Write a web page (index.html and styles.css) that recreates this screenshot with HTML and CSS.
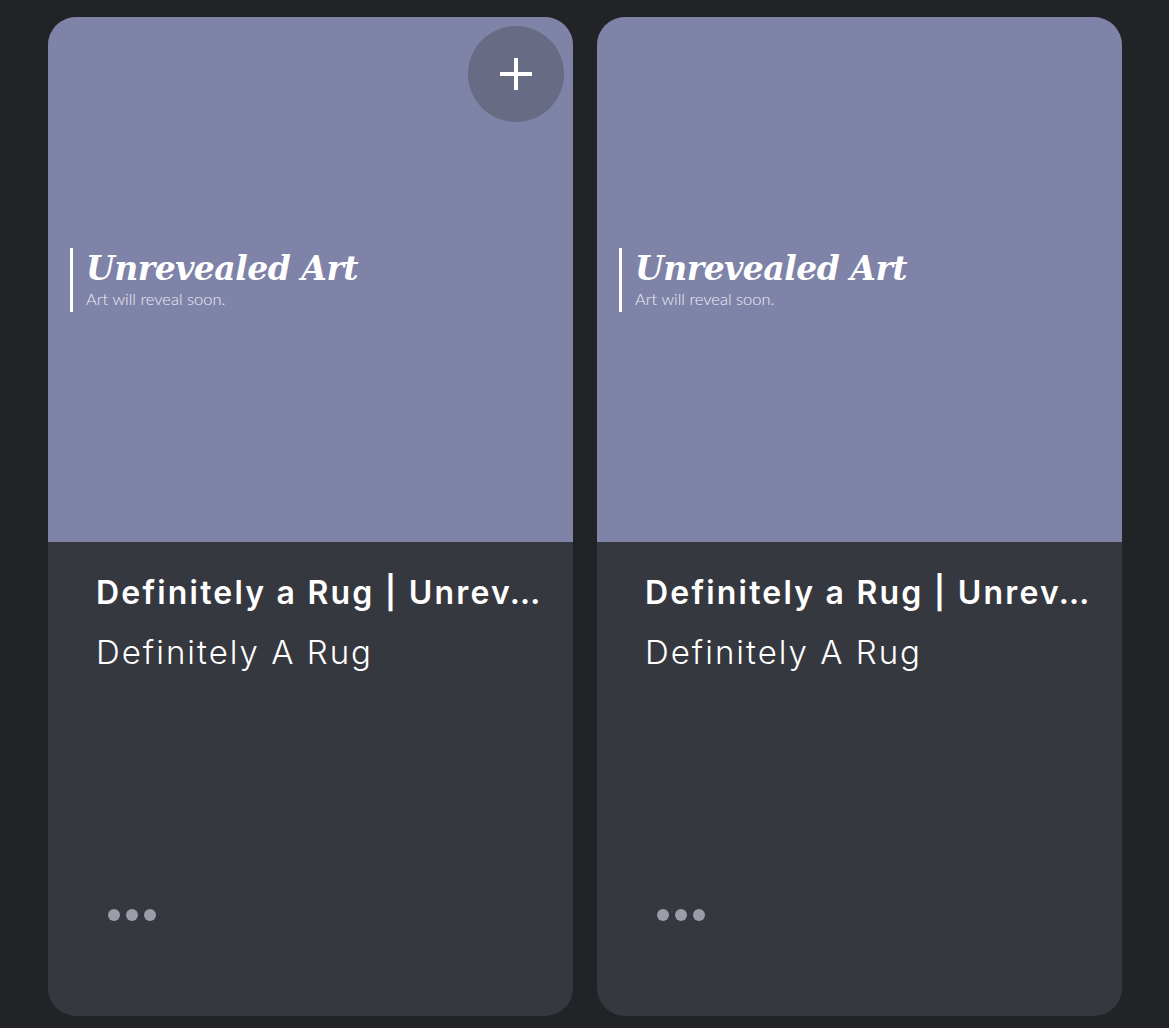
FILE: index.html
```html
<!DOCTYPE html>
<html>
<head>
<meta charset="utf-8">
<link rel="stylesheet" href="styles.css">
</head>
<body>
<div class="grid">
  <div class="card">
    <div class="art">
      <div class="label">
        <div class="label-title">Unrevealed Art</div>
        <div class="label-sub">Art will reveal soon.</div>
      </div>
      <button class="add" aria-label="Add">
        <svg width="36" height="36" viewBox="0 0 36 36"><path d="M18 2v32M2 18h32" stroke="#fff" stroke-width="4"/></svg>
      </button>
    </div>
    <div class="info">
      <div class="title">Definitely a Rug | Unrev…</div>
      <div class="creator">Definitely A Rug</div>
      <div class="dots"><span></span><span></span><span></span></div>
    </div>
  </div>
  <div class="card">
    <div class="art">
      <div class="label">
        <div class="label-title">Unrevealed Art</div>
        <div class="label-sub">Art will reveal soon.</div>
      </div>
    </div>
    <div class="info">
      <div class="title">Definitely a Rug | Unrev…</div>
      <div class="creator">Definitely A Rug</div>
      <div class="dots"><span></span><span></span><span></span></div>
    </div>
  </div>
</div>
</body>
</html>
```
FILE: styles.css
```css
html, body {
  margin: 0;
  background: #222327;
}
body {
  padding: 17px 48px 0;
  font-family: "Inter", "Noto Sans", sans-serif;
}
.grid {
  display: grid;
  grid-template-columns: 525px 525px;
  gap: 24px;
}
.card {
  height: 999px;
  border-radius: 28px;
  overflow: hidden;
  background: #363840;
  display: flex;
  flex-direction: column;
}
.art {
  position: relative;
  height: 525px;
  background: #7f83a8;
  display: flex;
  align-items: flex-start;
  padding: 231px 0 0 22px;
  box-sizing: border-box;
}
.label {
  border-left: 3px solid #fff;
  padding-left: 13px;
  height: 64px;
}
.label-title {
  font-family: "DejaVu Serif", "Liberation Serif", serif;
  font-style: italic;
  font-weight: bold;
  font-size: 33px;
  line-height: 41px;
  color: #fff;
  letter-spacing: -0.5px;
}
.label-sub {
  font-family: "Lato", "Open Sans", sans-serif;
  font-weight: 300;
  font-size: 16.5px;
  line-height: 18px;
  color: #eceef5;
  margin-top: 1px;
}
.add {
  position: absolute;
  top: 9px;
  right: 9px;
  width: 96px;
  height: 96px;
  border-radius: 50%;
  border: none;
  background: #676b84;
  display: flex;
  align-items: center;
  justify-content: center;
  padding: 0;
}
.info {
  flex: 1;
  padding: 29px 20px 0 48px;
  display: flex;
  flex-direction: column;
}
.title {
  font-size: 32px;
  font-weight: 600;
  line-height: 44px;
  color: #fff;
  white-space: nowrap;
  letter-spacing: 2.2px;
}
.creator {
  font-size: 33px;
  font-weight: 300;
  line-height: 50px;
  color: #fff;
  margin-top: 12px;
  letter-spacing: 2px;
}
.dots {
  display: flex;
  gap: 6px;
  margin-top: 232px;
  padding-left: 12px;
}
.dots span {
  width: 12px;
  height: 12px;
  border-radius: 50%;
  background: #9a9ca8;
}
```
